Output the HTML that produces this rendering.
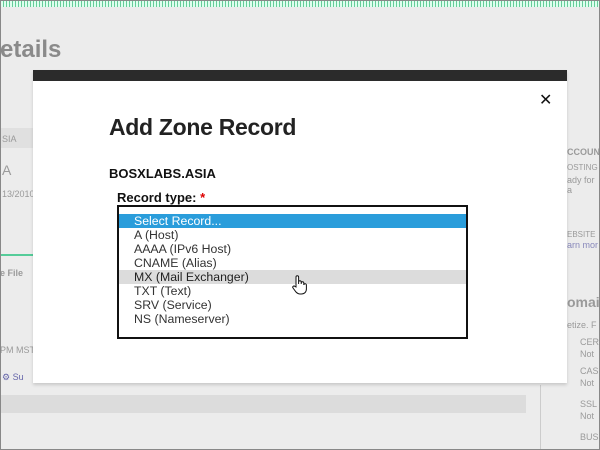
<!DOCTYPE html>
<html><head><meta charset="utf-8"><style>
*{margin:0;padding:0;box-sizing:border-box}
body{width:600px;height:450px;overflow:hidden;background:#ececec;font-family:"Liberation Sans",sans-serif;position:relative}
.frame{position:absolute;left:0;top:0;width:600px;height:450px;border:1px solid #888;z-index:9;pointer-events:none}
.bg{position:absolute;color:#9a9a9a;font-size:9px}
.modal{position:absolute;left:33px;top:70px;width:534px;height:313px;background:#fff;box-shadow:0 2px 3px rgba(0,0,0,.15)}
.bar{height:11px;background:#2b2b2b}
.close{position:absolute;left:506px;top:20px;font-size:16px;color:#111}
h1{position:absolute;left:76px;top:44px;font-size:23px;font-weight:bold;color:#222;letter-spacing:-0.3px}
.dom{position:absolute;left:76px;top:96px;font-size:13px;font-weight:bold;color:#111}
.lbl{position:absolute;left:84px;top:120px;font-size:13px;font-weight:bold;color:#111}
.lbl span{color:#d00}
.list{position:absolute;left:84px;top:135px;width:351px;height:134px;border:2px solid #111}
.it{height:14px;line-height:14px;font-size:12.3px;color:#333;padding-left:15px}
.sel{background:#2a9ddb;color:#fff}
.hov{background:#dcdcdc;color:#222}
</style></head><body>
<div class="frame"></div>
<div style="position:absolute;left:0;top:0;width:600px;height:7px;background:repeating-linear-gradient(90deg,#6c9 0 1px,#dfe 1px 3px)"></div>
<div class="bg" style="left:0;top:36px;font-size:24px;font-weight:bold;color:#8a8a8a">etails</div>
<div style="position:absolute;left:0;top:128px;width:33px;height:20px;background:#e0e0e0"></div>
<div class="bg" style="left:2px;top:134px">SIA</div>
<div class="bg" style="left:2px;top:162px;font-size:14px">A</div>
<div class="bg" style="left:2px;top:189px">13/2010</div>
<div style="position:absolute;left:0;top:254px;width:33px;height:2px;background:#5c9"></div>
<div class="bg" style="left:0;top:268px;font-weight:bold">e File</div>
<div class="bg" style="left:0;top:345px">PM MST</div>
<div class="bg" style="left:2px;top:372px;color:#66a">⚙ Su</div>
<div style="position:absolute;left:0;top:395px;width:526px;height:18px;background:#dcdcdc"></div>
<div style="position:absolute;left:540px;top:385px;width:1px;height:65px;background:#ccc"></div>
<div class="bg" style="left:567px;top:147px;font-weight:bold">CCOUN</div>
<div class="bg" style="left:567px;top:163px;font-size:8px">OSTING</div>
<div class="bg" style="left:567px;top:175px">ady for a</div>
<div class="bg" style="left:567px;top:230px;font-size:8px">EBSITE</div>
<div class="bg" style="left:567px;top:240px;color:#88b">arn mor</div>
<div class="bg" style="left:567px;top:294px;font-size:14px;font-weight:bold">omai</div>
<div class="bg" style="left:567px;top:320px">etize. F</div>
<div class="bg" style="left:580px;top:337px">CER</div><div class="bg" style="left:580px;top:349px">Not</div>
<div class="bg" style="left:580px;top:366px">CAS</div><div class="bg" style="left:580px;top:378px">Not</div>
<div class="bg" style="left:580px;top:399px">SSL</div><div class="bg" style="left:580px;top:411px">Not</div>
<div class="bg" style="left:580px;top:432px">BUS</div>
<div class="modal">
<div class="bar"></div>
<div class="close">✕</div>
<h1>Add Zone Record</h1>
<div class="dom">BOSXLABS.ASIA</div>
<div class="lbl">Record type: <span>*</span></div>
<div class="list">
<div style="height:7px"></div>
<div class="it sel">Select Record...</div>
<div class="it">A (Host)</div>
<div class="it">AAAA (IPv6 Host)</div>
<div class="it">CNAME (Alias)</div>
<div class="it hov">MX (Mail Exchanger)</div>
<div class="it">TXT (Text)</div>
<div class="it">SRV (Service)</div>
<div class="it">NS (Nameserver)</div>
</div>
<svg style="position:absolute;left:258px;top:204px" width="18" height="22" viewBox="0 0 18 22"><path d="M5 13V3a1.3 1.3 0 0 1 2.6 0v7V8a1.3 1.3 0 0 1 2.6 0v2V9a1.3 1.3 0 0 1 2.6 0v2a1.3 1.3 0 0 1 2.6 0v4c0 3-2 5-5 5H9c-2 0-3-1-4-2L2 14a1.2 1.2 0 0 1 2-1.5z" fill="#fff" stroke="#111" stroke-width="1"/></svg>
</div>
</body></html>
